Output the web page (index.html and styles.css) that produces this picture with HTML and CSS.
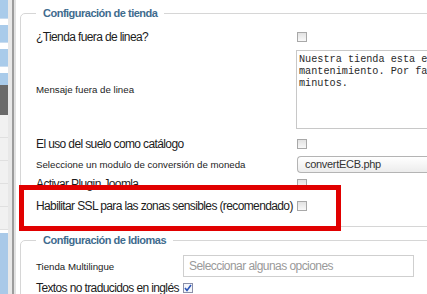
FILE: index.html
```html
<!DOCTYPE html>
<html lang="es">
<head>
    <meta charset="UTF-8">
    <meta name="viewport" content="width=device-width, initial-scale=1.0">
    <title>Configuración de tienda</title>
    <link rel="stylesheet" href="styles.css">
</head>
<body>
    <div class="sidebar">
        <div class="side-nav">
            <div class="nav-item"></div>
            <div class="nav-item"></div>
            <div class="nav-item"></div>
            <div class="nav-item last"></div>
            <div class="nav-active"></div>
            <div class="nav-sub"></div>
            <div class="nav-sub"></div>
            <div class="nav-sub"></div>
            <div class="nav-sub"></div>
            <div class="nav-sub"></div>
            <div class="nav-bottom"></div>
        </div>
        <div class="side-edge"></div>
    </div>

    <div class="main">
        <fieldset class="panel">
            <legend>Configuración de tienda</legend>
            <div class="form-grid shop">
                <label class="lbl big">¿Tienda fuera de linea?</label>
                <span class="check"></span>

                <label class="lbl small">Mensaje fuera de linea</label>
                <div class="textarea">Nuestra tienda esta en
mantenimiento. Por favor vuelva en unos
minutos.</div>

                <label class="lbl big">El uso del suelo como catálogo</label>
                <span class="check"></span>

                <label class="lbl small">Seleccione un modulo de conversión de moneda</label>
                <div class="select">convertECB.php</div>

                <label class="lbl big">Activar Plugin Joomla</label>
                <span class="check"></span>

                <label class="lbl big">Habilitar SSL para las zonas sensibles (recomendado)</label>
                <span class="check"></span>
            </div>
        </fieldset>

        <fieldset class="panel">
            <legend>Configuración de Idiomas</legend>
            <div class="form-grid lang">
                <label class="lbl small">Tienda Multilingue</label>
                <div class="multi">Seleccionar algunas opciones</div>

                <label class="lbl big">Textos no traducidos en inglés</label>
                <span class="check checked">
                    <svg width="8" height="8" viewBox="0 0 8 8"><path d="M1 4 L3 6.5 L7 1" fill="none" stroke="#2a55b8" stroke-width="1.6"/></svg>
                </span>
            </div>
        </fieldset>
    </div>

    <!-- highlight drawn over the SSL row -->
    <div class="highlight"></div>
</body>
</html>
```

FILE: styles.css
```css
body {
    margin: 0;
    height: 294px;
    display: flex;
    overflow: hidden;
    background: white;
    font-family: "Liberation Sans", Arial, sans-serif;
    color: #1c1c1c;
}
.sidebar {
    display: flex;
    width: 16px;
    flex-shrink: 0;
}
.side-nav {
    width: 8px;
    display: flex;
    flex-direction: column;
}
.nav-item {
    height: 17px;
    background: #a9cbea;
    border-bottom: 1px solid #c9dcef;
    margin-bottom: 6px;
}
.nav-item:first-child {
    height: 18px;
    margin-bottom: 6px;
}
.nav-item.last {
    height: 12px;
    margin-bottom: 0;
    border-bottom: none;
}
.nav-active {
    height: 30px;
    background: #6a6a6a;
}
.nav-sub {
    height: 22px;
    background: #f1f1f1;
    border-bottom: 1px solid #e0e0e0;
}
.nav-bottom {
    flex: 1;
    background: #a9c9e8;
    margin-top: 3px;
}
.side-edge {
    width: 8px;
    background: linear-gradient(to right, #e8e8e8 0 4px, #9c9c9c 4px 6px, #e2e2e2 6px 8px);
}
.main {
    flex: 1;
    overflow: hidden;
    padding-left: 4px;
}
.panel {
    margin: 6px -20px 0 0;
    padding: 9px 0 7px 15px;
    border: 1px solid #d6d6d6;
    border-radius: 5px;
}
.panel legend {
    padding: 0 7px;
    font-size: 11px;
    line-height: 14px;
    font-weight: bold;
    letter-spacing: -0.5px;
    color: #3f6c8e;
}
.form-grid {
    display: grid;
    align-items: center;
}
.form-grid.shop {
    grid-template-columns: 261px 1fr;
    grid-template-rows: 16px 89px 19px 22px 18px 26px;
}
.form-grid.lang {
    grid-template-columns: 147px 1fr;
    grid-template-rows: 22px 22px;
    margin-top: -1px;
}
.lbl {
    white-space: nowrap;
}
.lbl.big {
    font-size: 12px;
    letter-spacing: -0.62px;
}
.lbl.small {
    font-size: 9.7px;
}
.check {
    width: 8px;
    height: 8px;
    border: 1px solid #a8a8a8;
    background: linear-gradient(#e2e2e2, #f8f8f8);
    display: flex;
    align-items: center;
    justify-content: center;
}
.check.checked {
    background: #f4f6fb;
    border-color: #8a8fa8;
}
.textarea {
    height: 71px;
    margin-left: -1px;
    padding: 3px 2px;
    border: 1px solid #c8c8c8;
    font-family: "Liberation Mono", "Courier New", monospace;
    font-size: 10.2px;
    line-height: 12px;
    white-space: pre;
    overflow: hidden;
    color: #2a2a2a;
}
.select {
    height: 15px;
    line-height: 15px;
    padding-left: 7px;
    border: 1px solid #b4b4b4;
    border-right: none;
    border-radius: 4px 0 0 4px;
    background: linear-gradient(#ffffff, #ececec);
    font-size: 11px;
    letter-spacing: -0.3px;
    color: #333;
}
.multi {
    width: 224px;
    height: 20px;
    line-height: 20px;
    padding-left: 5px;
    border: 1px solid #cfcfcf;
    font-size: 12px;
    letter-spacing: -0.55px;
    color: #9a9a9a;
}
.highlight {
    position: absolute;
    left: 19px;
    top: 185px;
    width: 312px;
    height: 36px;
    border: 5px solid #e10000;
}
```
